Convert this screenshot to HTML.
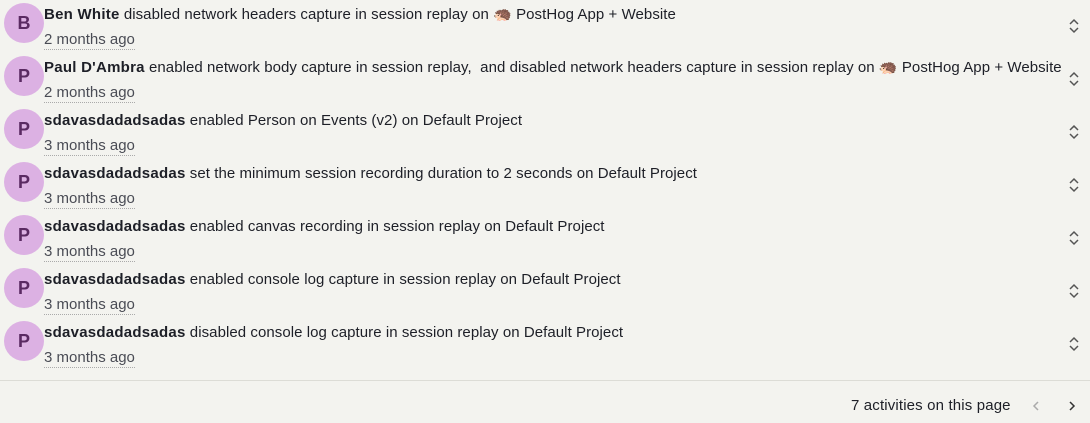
<!DOCTYPE html>
<html><head><style>
body{margin:0;background:#f3f3ef;font-family:"Liberation Sans",sans-serif;font-size:15px;color:#1d1f27;width:1090px;height:423px;overflow:hidden;position:relative}
.row{position:absolute;left:0;width:1090px;height:53px}
.av{position:absolute;left:4px;top:3px;width:40px;height:40px;border-radius:50%;background:#dcb1e3;color:#5a2a62;font-weight:bold;font-size:18px;text-align:center;line-height:40px}
.t{position:absolute;left:44px;top:6px;white-space:nowrap;line-height:18px;letter-spacing:0.06px}
.d{position:absolute;left:44px;top:31px;color:#4a4c55;border-bottom:1px dotted #aaa;line-height:18px}
.c{position:absolute;left:1066px;top:17px}
b{font-weight:bold;letter-spacing:0.25px}
.hr{position:absolute;left:0;top:380px;width:1090px;border-top:1px solid #dcdcd6}
.f{position:absolute;left:851px;top:397px;color:#1d1f27;letter-spacing:0.15px}
</style></head><body>
<div class="row" style="top:0"><div class="av">B</div><div class="t"><b>Ben White</b> disabled network headers capture in session replay on 🦔 PostHog App + Website</div><div class="d">2 months ago</div><svg class="c" width="16" height="18"><path d="M4 7l4-4 4 4M4 11l4 4 4-4" stroke="#555" stroke-width="1.5" fill="none"/></svg></div>
<div class="row" style="top:53px"><div class="av">P</div><div class="t"><b>Paul D'Ambra</b> enabled network body capture in session replay,&nbsp; and disabled network headers capture in session replay on 🦔 PostHog App + Website</div><div class="d">2 months ago</div><svg class="c" width="16" height="18"><path d="M4 7l4-4 4 4M4 11l4 4 4-4" stroke="#555" stroke-width="1.5" fill="none"/></svg></div>
<div class="row" style="top:106px"><div class="av">P</div><div class="t"><b>sdavasdadadsadas</b> enabled Person on Events (v2) on Default Project</div><div class="d">3 months ago</div><svg class="c" width="16" height="18"><path d="M4 7l4-4 4 4M4 11l4 4 4-4" stroke="#555" stroke-width="1.5" fill="none"/></svg></div>
<div class="row" style="top:159px"><div class="av">P</div><div class="t"><b>sdavasdadadsadas</b> set the minimum session recording duration to 2 seconds on Default Project</div><div class="d">3 months ago</div><svg class="c" width="16" height="18"><path d="M4 7l4-4 4 4M4 11l4 4 4-4" stroke="#555" stroke-width="1.5" fill="none"/></svg></div>
<div class="row" style="top:212px"><div class="av">P</div><div class="t"><b>sdavasdadadsadas</b> enabled canvas recording in session replay on Default Project</div><div class="d">3 months ago</div><svg class="c" width="16" height="18"><path d="M4 7l4-4 4 4M4 11l4 4 4-4" stroke="#555" stroke-width="1.5" fill="none"/></svg></div>
<div class="row" style="top:265px"><div class="av">P</div><div class="t"><b>sdavasdadadsadas</b> enabled console log capture in session replay on Default Project</div><div class="d">3 months ago</div><svg class="c" width="16" height="18"><path d="M4 7l4-4 4 4M4 11l4 4 4-4" stroke="#555" stroke-width="1.5" fill="none"/></svg></div>
<div class="row" style="top:318px"><div class="av">P</div><div class="t"><b>sdavasdadadsadas</b> disabled console log capture in session replay on Default Project</div><div class="d">3 months ago</div><svg class="c" width="16" height="18"><path d="M4 7l4-4 4 4M4 11l4 4 4-4" stroke="#555" stroke-width="1.5" fill="none"/></svg></div>
<div class="hr"></div>
<div class="f">7 activities on this page</div>
<svg style="position:absolute;left:1030px;top:399px" width="12" height="14"><path d="M8 3L4 7l4 4" stroke="#aaa" stroke-width="1.5" fill="none"/></svg>
<svg style="position:absolute;left:1066px;top:399px" width="12" height="14"><path d="M4 3l4 4-4 4" stroke="#333" stroke-width="1.5" fill="none"/></svg>
</body></html>
